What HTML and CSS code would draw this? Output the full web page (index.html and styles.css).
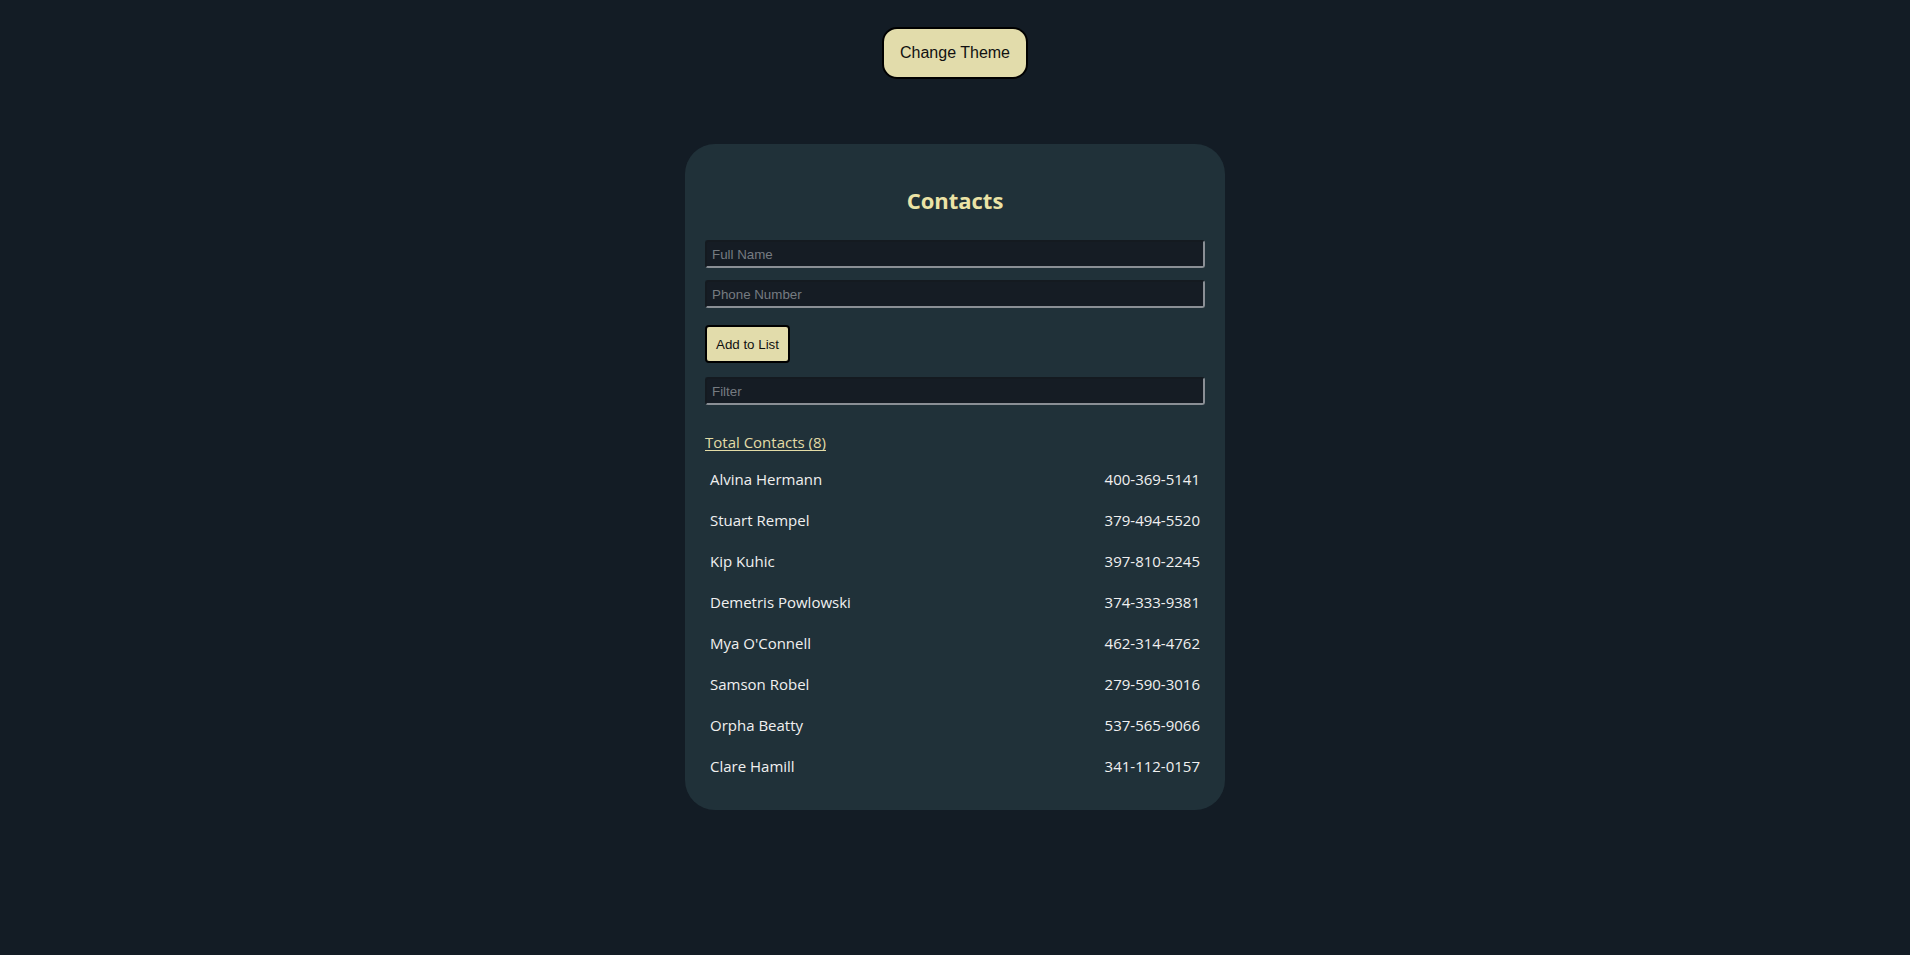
FILE: index.html
```html
<!DOCTYPE html>
<html lang="en">
<head>
<meta charset="utf-8">
<title>Contacts</title>
<link rel="stylesheet" href="styles.css">
</head>
<body>
  <div class="top">
    <button class="theme-btn" type="button">Change Theme</button>
  </div>
  <main class="card">
    <h2 class="title">Contacts</h2>
    <form class="form">
      <input class="field" type="text" placeholder="Full Name">
      <input class="field field-phone" type="text" placeholder="Phone Number">
      <button class="add-btn" type="button">Add to List</button>
      <input class="field field-filter" type="text" placeholder="Filter">
    </form>
    <h3 class="total">Total Contacts (8)</h3>
    <ul class="list">
      <li class="row"><span>Alvina Hermann</span><span>400-369-5141</span></li>
      <li class="row"><span>Stuart Rempel</span><span>379-494-5520</span></li>
      <li class="row"><span>Kip Kuhic</span><span>397-810-2245</span></li>
      <li class="row"><span>Demetris Powlowski</span><span>374-333-9381</span></li>
      <li class="row"><span>Mya O'Connell</span><span>462-314-4762</span></li>
      <li class="row"><span>Samson Robel</span><span>279-590-3016</span></li>
      <li class="row"><span>Orpha Beatty</span><span>537-565-9066</span></li>
      <li class="row"><span>Clare Hamill</span><span>341-112-0157</span></li>
    </ul>
  </main>
</body>
</html>
```
FILE: styles.css
```css
* { box-sizing: border-box; }

html, body {
  margin: 0;
  padding: 0;
}

body {
  background: #131c25;
  font-family: "Open Sans", "Noto Sans", sans-serif;
  min-height: 955px;
}

.top {
  display: flex;
  justify-content: center;
  padding-top: 27px;
}

.theme-btn {
  font-family: "Liberation Sans", Arial, sans-serif;
  font-size: 16px;
  line-height: 18px;
  color: #111;
  background: #e2dcab;
  border: 2px solid #000;
  border-radius: 15px;
  padding: 15px 16px;
  height: 52px;
}

.card {
  width: 540px;
  margin: 65px auto 0;
  padding: 20px 20px 24px;
  background: #203139;
  border-radius: 30px;
}

.title {
  margin: 20px 0 24px;
  text-align: center;
  font-size: 22px;
  font-weight: 700;
  line-height: 32px;
  color: #ebe3a6;
}

.form {
  display: flex;
  flex-direction: column;
}

.field {
  width: 100%;
  height: 28px;
  padding: 0 5px;
  font-family: "Liberation Sans", Arial, sans-serif;
  font-size: 13.33px;
  color: #ddd;
  background: #151c24;
  border: 2px solid;
  border-color: #141a20 #8a8f95 #8a8f95 #141a20;
  border-radius: 3px;
  outline: none;
}

.field::placeholder {
  color: #767b81;
}

.field-phone {
  margin-top: 12px;
}

.add-btn {
  align-self: flex-start;
  margin-top: 17px;
  height: 38px;
  padding: 0 9px;
  font-family: "Liberation Sans", Arial, sans-serif;
  font-size: 13.33px;
  color: #111;
  background: #e2dcab;
  border: 2px solid #000;
  border-radius: 4px;
}

.field-filter {
  margin-top: 14px;
}

.total {
  margin: 26px 0 5px;
  font-size: 15px;
  font-weight: 400;
  line-height: 22px;
  color: #e3dca6;
  text-decoration: underline;
  text-underline-offset: 2px;
}

.list {
  list-style: none;
  margin: 0;
  padding: 0;
}

.row {
  display: flex;
  justify-content: space-between;
  align-items: center;
  height: 41px;
  padding: 0 5px;
  font-size: 15px;
  color: #f0f0f0;
}
```
